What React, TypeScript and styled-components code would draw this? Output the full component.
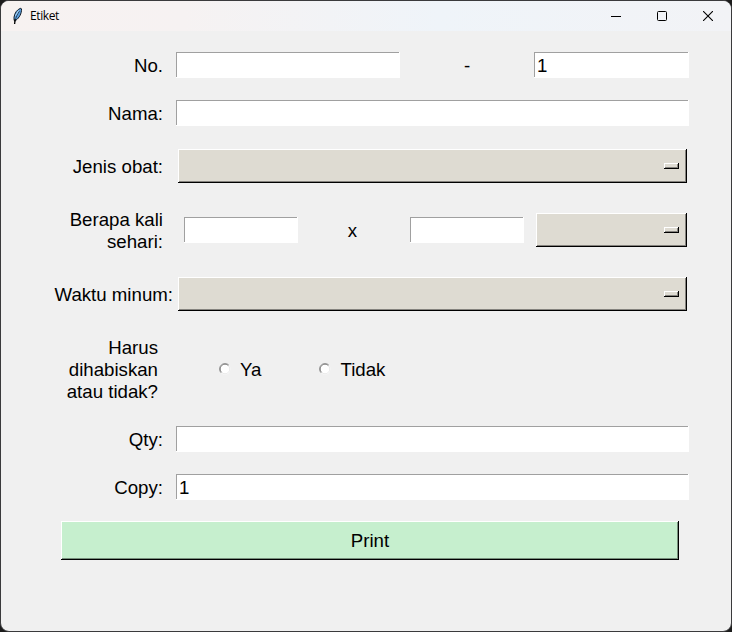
import React from "react";
import styled, { createGlobalStyle } from "styled-components";

const GlobalStyle = createGlobalStyle`
  * { box-sizing: border-box; }
  body { margin: 0; background: #1c1c1c; overflow: hidden; }
`;

const Window = styled.div`
  width: 732px;
  height: 632px;
  border: 1px solid #3a3a3c;
  border-radius: 9px;
  background: #f0f0f0;
  overflow: hidden;
  color: #000;
  font: 18.67px/22px "Liberation Sans", Arial, sans-serif;
`;

const TitleBar = styled.header`
  display: flex;
  align-items: center;
  height: 30px;
  padding-left: 9px;
  background: linear-gradient(90deg, #f7f2f1 0%, #f6f2f2 25%, #eff4f9 60%, #f2f3f6 100%);
`;

const Title = styled.span`
  flex: 1;
  margin-left: 6px;
  font: 12px/16px "Open Sans", "Segoe UI", sans-serif;
  letter-spacing: -0.4px;
`;

const Caption = styled.button`
  display: flex;
  align-items: center;
  justify-content: center;
  width: 46px;
  height: 30px;
  padding: 0;
  border: 0;
  background: none;
`;

const Form = styled.main`
  padding-top: 10px;
`;

const Row = styled.div<{ $height: number }>`
  display: flex;
  align-items: center;
  height: ${(p) => p.$height}px;
`;

const Label = styled.label<{ $gap?: number }>`
  flex: none;
  width: 175px;
  padding-top: 2px;
  padding-right: ${(p) => p.$gap ?? 13}px;
  text-align: right;
  white-space: pre-line;
`;

const Entry = styled.input<{ $width: number; $indent?: number }>`
  flex: none;
  width: ${(p) => p.$width}px;
  height: 26px;
  margin-left: ${(p) => p.$indent ?? 0}px;
  padding: 2px 2px 0 3px;
  border: 0;
  border-radius: 0;
  outline: 0;
  background: #fff;
  box-shadow: inset -1px -1px #fff, inset 1px 1px #a0a0a0;
  color: #000;
  font: inherit;
`;

const Separator = styled.span<{ $width: number; $shift?: number }>`
  flex: none;
  width: ${(p) => p.$width}px;
  padding-top: 2px;
  padding-right: ${(p) => p.$shift ?? 0}px;
  text-align: center;
`;

const raised = "inset -1px -1px #000, inset 1px 1px #fff";

const OptionMenu = styled.button<{ $width: number; $indent: number }>`
  flex: none;
  display: flex;
  align-items: center;
  justify-content: flex-end;
  width: ${(p) => p.$width}px;
  height: 34px;
  margin-left: ${(p) => p.$indent}px;
  padding: 0 8px 0 0;
  border: 0;
  background: #dedbd2;
  box-shadow: ${raised}, inset -2px -2px #85837e;
`;

const Indicator = styled.span`
  width: 15px;
  height: 6px;
  background: #dedbd2;
  box-shadow: ${raised}, inset -2px -2px #85837e;
`;

const Choice = styled.label<{ $indent: number }>`
  display: flex;
  align-items: center;
  gap: 9px;
  margin-left: ${(p) => p.$indent}px;
`;

const ChoiceText = styled.span`
  padding-top: 2px;
`;

const PrintButton = styled.button`
  display: block;
  width: 618px;
  height: 39px;
  margin: 10px 0 0 60px;
  padding: 0;
  border: 0;
  background: #c6efce;
  box-shadow: ${raised}, inset -2px -2px #778f7c;
  color: #000;
  font: inherit;
`;

const Feather = () => (
  <svg width="14" height="18" viewBox="0 0 14 18">
    <path d="M10.8 1.2C7.2 2.3 4.5 6 4 10.3l.1 3.1 1.8-.1C9.2 10.8 11.7 6.7 11.5 2z" fill="#5a9fe0" stroke="#111a24" strokeWidth="1" />
    <path d="M9.5 4C7.6 7 6 9.5 4.8 15" fill="none" stroke="#17212c" strokeWidth=".7" />
    <path d="M8.6 3.5 5.4 8.8" stroke="#b3d8f5" strokeWidth="1" />
    <path d="M5.1 12.3 4.6 17" stroke="#000" strokeWidth="1.3" />
  </svg>
);

const Radio = () => (
  <svg width="12" height="12" viewBox="0 0 12 12">
    <circle cx="6" cy="6" r="5.5" fill="#fff" />
    <path d="M2.1 9.9A5.5 5.5 0 0 1 9.9 2.1" fill="none" stroke="#a0a0a0" />
    <path d="M2.6 9.4A4.8 4.8 0 0 1 9.4 2.6" fill="none" stroke="#696969" strokeWidth=".8" />
    <path d="M2.6 9.4A4.8 4.8 0 0 0 9.4 2.6" fill="none" stroke="#e3e3e3" strokeWidth=".8" />
  </svg>
);

const Menu = ({ width, indent }: { width: number; indent: number }) => (
  <OptionMenu $width={width} $indent={indent}>
    <Indicator />
  </OptionMenu>
);

export default function App() {
  return (
    <>
      <GlobalStyle />
      <Window>
        <TitleBar>
          <Feather />
          <Title>Etiket</Title>
          <Caption aria-label="Minimize">
            <svg width="10" height="10" viewBox="0 0 10 10">
              <path d="M0 5.5h10" stroke="#000" />
            </svg>
          </Caption>
          <Caption aria-label="Maximize">
            <svg width="10" height="10" viewBox="0 0 10 10">
              <rect x=".5" y=".5" width="9" height="9" rx="1" fill="none" stroke="#000" />
            </svg>
          </Caption>
          <Caption aria-label="Close">
            <svg width="10" height="10" viewBox="0 0 10 10">
              <path d="m0 0 10 10m0-10-10 10" stroke="#000" strokeWidth="1.1" />
            </svg>
          </Caption>
        </TitleBar>
        <Form>
          <Row $height={48}>
            <Label>No.</Label>
            <Entry $width={224} />
            <Separator $width={134}>-</Separator>
            <Entry $width={155} defaultValue="1" />
          </Row>
          <Row $height={48}>
            <Label>Nama:</Label>
            <Entry $width={513} />
          </Row>
          <Row $height={58}>
            <Label>Jenis obat:</Label>
            <Menu width={509} indent={2} />
          </Row>
          <Row $height={70}>
            <Label>{"Berapa kali\nsehari:"}</Label>
            <Entry $width={114} $indent={8} />
            <Separator $width={112} $shift={3}>x</Separator>
            <Entry $width={114} />
            <Menu width={151} indent={12} />
          </Row>
          <Row $height={58}>
            <Label $gap={3}>Waktu minum:</Label>
            <Menu width={509} indent={2} />
          </Row>
          <Row $height={92}>
            <Label $gap={18}>{"Harus\ndihabiskan\natau tidak?"}</Label>
            <Choice $indent={43}>
              <Radio />
              <ChoiceText>Ya</ChoiceText>
            </Choice>
            <Choice $indent={58}>
              <Radio />
              <ChoiceText>Tidak</ChoiceText>
            </Choice>
          </Row>
          <Row $height={48}>
            <Label>Qty:</Label>
            <Entry $width={513} />
          </Row>
          <Row $height={48}>
            <Label>Copy:</Label>
            <Entry $width={513} defaultValue="1" />
          </Row>
          <PrintButton>Print</PrintButton>
        </Form>
      </Window>
    </>
  );
}
